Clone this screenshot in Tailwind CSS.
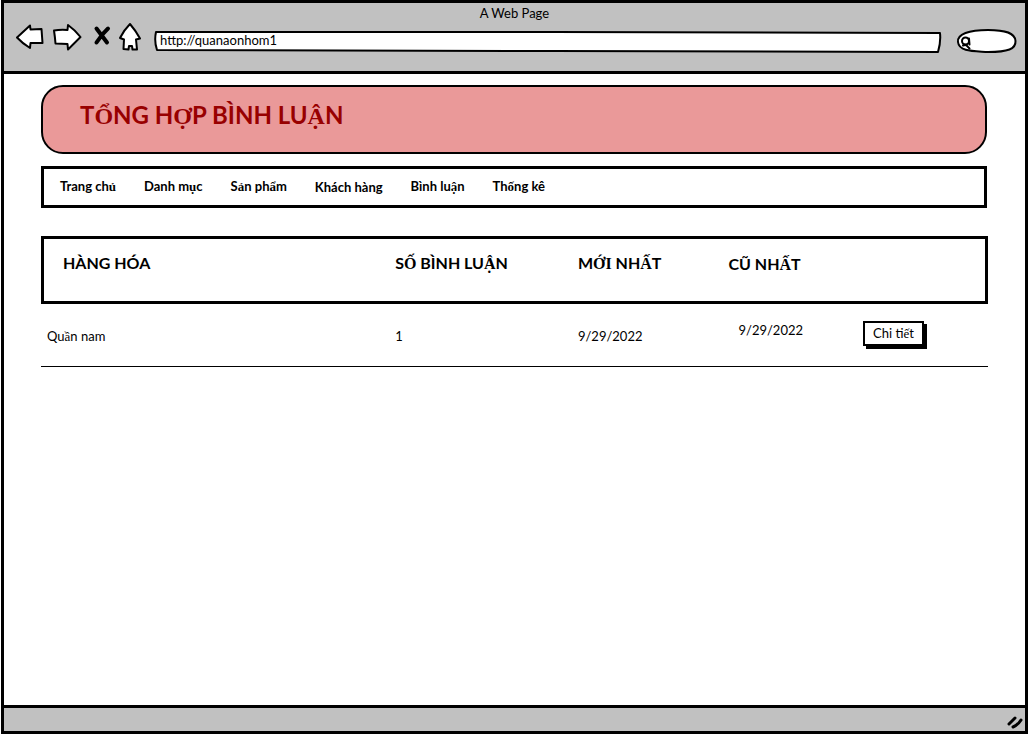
<!DOCTYPE html>
<html lang="vi">
<head>
<meta charset="utf-8">
<meta name="viewport" content="width=device-width, initial-scale=1">
<title>A Web Page</title>
<script src="https://cdn.jsdelivr.net/npm/@tailwindcss/browser@4"></script>
</head>
<body class="bg-white font-['Lato',sans-serif] text-[13px] leading-4 text-black">
<div class="flex min-h-screen flex-col px-px pb-px">
  <div class="flex grow flex-col border-3 border-black">
    <header class="flex h-[71px] flex-col border-b-3 border-black bg-[#c1c1c1] pt-px">
      <p class="pt-px text-center text-[13px] leading-4">A Web Page</p>
      <div class="flex items-start pr-[9px] pl-3">
        <div class="flex h-8 w-[126px] shrink-0 items-center">
          <button type="button" aria-label="Back">
            <svg class="h-8 w-[30px]" viewBox="0 0 30 32" fill="#fff" stroke="#000" stroke-width="2" stroke-linejoin="round"><path d="M1 16.500 L14 4.500 L14.500 8.500 L25.500 8 Q26 15 26.500 22 L14.500 22 L14 27 Q6 22 1 16.500 Z"/></svg>
          </button>
          <button type="button" class="ml-1.5" aria-label="Forward">
            <svg class="h-8 w-[30px]" viewBox="0 0 30 32" fill="#fff" stroke="#000" stroke-width="2" stroke-linejoin="round"><path d="M2 9.500 Q8 8.500 15.500 9 L16 4 Q23 9 28.500 16 L16 28.500 L15.500 23 L3.500 22.500 Q3 16 2 9.500Z"/></svg>
          </button>
          <button type="button" class="ml-2.5" aria-label="Stop">
            <svg class="h-8 w-5" viewBox="0 0 20 32" fill="none" stroke="#000" stroke-width="4" stroke-linecap="round"><path d="M4.500 7.500 L15 21.500 M16 7.500 Q10 13 4.500 21.500"/></svg>
          </button>
          <button type="button" class="ml-[7px]" aria-label="Home">
            <svg class="h-8 w-[22px]" viewBox="0 0 22 32" fill="#fff" stroke="#000" stroke-width="2" stroke-linejoin="round"><path d="M11 3 Q17 10 21 17.500 L17 18.500 L18 28.500 L13.500 28.500 L13 25 L10 25 L9.500 28.500 L4.500 28 L5 18.500 L1 17 Q5 9 11 3 Z"/></svg>
          </button>
        </div>
        <div class="relative mt-[9px] ml-3 h-[22px] grow pt-px">
          <svg class="absolute inset-0 h-full w-full overflow-visible" viewBox="0 0 788 22" preserveAspectRatio="none" fill="#fff" stroke="#000" stroke-width="2" stroke-linejoin="round"><path vector-effect="non-scaling-stroke" d="M2 2 L400 2 L787 3 Q788 12 785 22 L400 21 L3 20 Q0 11 2 2Z"/></svg>
          <input type="text" aria-label="Address" value="http://quanaonhom1" class="relative block h-[18px] w-full bg-transparent px-1.5 text-[13px] leading-4 outline-none">
        </div>
        <div class="relative mt-2 ml-[15px] h-6 w-[60px] shrink-0">
          <svg class="absolute inset-0 h-full w-full overflow-visible" viewBox="0 0 60 24" fill="#fff" stroke="#000" stroke-width="2"><path d="M2 13 C1 5 13 1 32 1 C50 1 59 4 59.500 12 C60 20 52 23 32 23 C18 22 3 23 2 13Z"/><circle cx="9.500" cy="12" r="3.500"/><path d="M7 16.500 Q10 15 11 17 L13.500 19.500 M13 9.500 L13.500 15.500" fill="none" stroke-linecap="round"/></svg>
          <input type="search" aria-label="Search" class="relative block h-6 w-full bg-transparent pr-3 pl-5 outline-none">
        </div>
      </div>
    </header>

    <main class="grow px-[37px] pt-[11px]">
      <div class="mr-px h-[69px] rounded-[22px] border-2 border-black bg-[#ea9999] pt-3 pl-[37px]">
        <h1 class="text-2xl leading-8 font-bold text-[#980000]">T<span class="font-['Liberation_Serif',serif]">Ổ</span>NG H<span class="font-['Liberation_Serif',serif]">Ợ</span>P BÌNH LU<span class="font-['Liberation_Serif',serif]">Ậ</span>N</h1>
      </div>

      <nav class="mt-3 mr-px flex h-[42px] items-center gap-7 border-3 border-black pb-px pl-4 text-[13px] font-bold">
        <a href="#">Trang ch<span class="font-['Liberation_Serif',serif]">ủ</span></a>
        <a href="#">Danh m<span class="font-['Liberation_Serif',serif]">ụ</span>c</a>
        <a href="#">S<span class="font-['Liberation_Serif',serif]">ả</span>n ph<span class="font-['Liberation_Serif',serif]">ẩ</span>m</a>
        <a href="#">Khách hàng</a>
        <a href="#">Bình lu<span class="font-['Liberation_Serif',serif]">ậ</span>n</a>
        <a href="#">Th<span class="font-['Liberation_Serif',serif]">ố</span>ng kê</a>
      </nav>

      <div class="mt-7 border-b border-black">
        <table class="w-full table-fixed border-separate border-spacing-0 text-left">
          <colgroup><col class="w-[37.4%]"><col class="w-[19.3%]"><col class="w-[15.9%]"><col class="w-[14.2%]"><col></colgroup>
          <thead>
            <tr class="h-[68px] align-top text-base leading-5">
              <th class="border-y-3 border-l-3 border-black pt-3.5 pl-[19px]">HÀNG HÓA</th>
              <th class="border-y-3 border-black pt-3.5">S<span class="font-['Liberation_Serif',serif]">Ố</span> BÌNH LU<span class="font-['Liberation_Serif',serif]">Ậ</span>N</th>
              <th class="border-y-3 border-black pt-3.5">M<span class="font-['Liberation_Serif',serif]">ỚI</span> NH<span class="font-['Liberation_Serif',serif]">Ấ</span>T</th>
              <th class="border-y-3 border-black pt-[15px]">CŨ NH<span class="font-['Liberation_Serif',serif]">Ấ</span>T</th>
              <td class="border-y-3 border-r-3 border-black"></td>
            </tr>
          </thead>
          <tbody>
            <tr class="h-[62px] align-top">
              <td class="pt-6 pl-1.5">Qu<span class="font-['Liberation_Serif',serif]">ầ</span>n nam</td>
              <td class="pt-6">1</td>
              <td class="pt-6">9/29/2022</td>
              <td class="pt-[18px] pl-2.5">9/29/2022</td>
              <td class="pt-[17px]"><button type="button" class="block h-[25px] w-[61px] border-2 border-black bg-white text-[13px] leading-4 shadow-[3px_3px_0_0_#000]">Chi ti<span class="font-['Liberation_Serif',serif]">ế</span>t</button></td>
            </tr>
          </tbody>
        </table>
      </div>
    </main>

    <footer class="flex h-[26px] items-center justify-end border-t-3 border-black bg-[#c1c1c1]">
      <svg class="mt-1 h-4 w-[18px]" viewBox="0 0 18 16" fill="none" stroke="#000" stroke-width="3" stroke-linecap="round"><path d="M2 10 Q5 7 8 4 M6 13 Q11 11 14 6"/></svg>
    </footer>
  </div>
</div>
</body>
</html>
